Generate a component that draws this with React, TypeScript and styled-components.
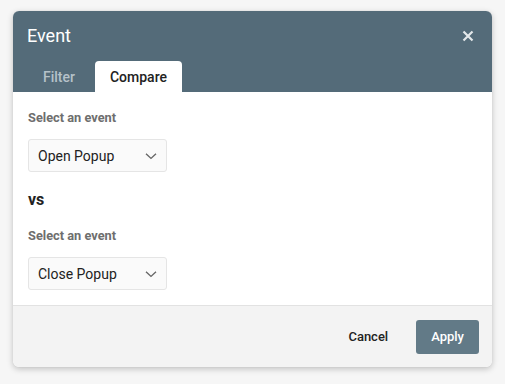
import React from "react";
import styled, { createGlobalStyle } from "styled-components";

const GlobalStyle = createGlobalStyle`
  html, body {
    margin: 0;
    padding: 0;
    background: #f6f6f6;
    font-family: Roboto, "Liberation Sans", Arial, sans-serif;
  }
`;

const Page = styled.div`
  padding: 11px 13px;
`;

const Dialog = styled.div`
  width: 479px;
  height: 356px;
  border-radius: 6px;
  overflow: hidden;
  background: #fff;
  box-shadow: 0 2px 6px rgba(0, 0, 0, 0.22), 0 0 1px rgba(0, 0, 0, 0.12);
  display: flex;
  flex-direction: column;
`;

const Header = styled.div`
  background: #546b79;
  padding: 13px 18px 0 14px;
  display: flex;
  flex-direction: column;
  gap: 13px;
`;

const TitleRow = styled.div`
  display: flex;
  align-items: center;
  justify-content: space-between;
  height: 24px;
`;

const Title = styled.h2`
  margin: 0;
  font-size: 18px;
  line-height: 24px;
  font-weight: 400;
  color: #fff;
`;

const CloseButton = styled.button`
  border: 0;
  background: none;
  padding: 0;
  width: 12px;
  height: 12px;
  display: flex;
  align-items: center;
  justify-content: center;
  cursor: pointer;
`;

const Tabs = styled.div`
  display: flex;
  gap: 5px;
  padding-left: 1px;
`;

const Tab = styled.div<{ $active?: boolean }>`
  height: 31px;
  padding: 0 15px;
  display: flex;
  align-items: center;
  border-radius: 4px 4px 0 0;
  font-size: 14px;
  font-weight: 500;
  background: ${(p) => (p.$active ? "#fff" : "transparent")};
  color: ${(p) => (p.$active ? "#222" : "#b6c2c9")};
`;

const Body = styled.div`
  flex: 1;
  padding: 18px 15px 0;
  display: flex;
  flex-direction: column;
  align-items: flex-start;
`;

const Label = styled.div`
  font-size: 12.8px;
  line-height: 16px;
  font-weight: 700;
  color: #6e6e6e;
  margin-bottom: 13px;
`;

const Select = styled.div`
  box-sizing: border-box;
  width: 139px;
  height: 33px;
  padding: 0 9px;
  border: 1px solid #e5e5e5;
  border-radius: 3px;
  background: #fafafa;
  display: flex;
  align-items: center;
  justify-content: space-between;
  font-size: 14px;
  color: #222;
`;

const Versus = styled.div`
  font-size: 16px;
  line-height: 20px;
  font-weight: 700;
  color: #222;
  margin: 18px 0 18px;
`;

const Footer = styled.div`
  height: 62px;
  box-sizing: border-box;
  border-top: 1px solid #e2e2e2;
  background: #f3f3f3;
  padding: 0 13px;
  display: flex;
  align-items: center;
  justify-content: flex-end;
  gap: 16px;
`;

const Button = styled.button<{ $primary?: boolean }>`
  height: 34px;
  padding: 0 ${(p) => (p.$primary ? "15px" : "12px")};
  border: 0;
  border-radius: 3px;
  font-family: inherit;
  font-size: 13px;
  font-weight: 500;
  cursor: pointer;
  background: ${(p) => (p.$primary ? "#627a87" : "transparent")};
  color: ${(p) => (p.$primary ? "#fff" : "#222")};
`;

const Chevron = () => (
  <svg width="12" height="8" viewBox="0 0 12 8" fill="none">
    <path d="M1 1.8l5 4.6 5-4.6" stroke="#666" strokeWidth="1.4" />
  </svg>
);

const CloseIcon = () => (
  <svg width="12" height="12" viewBox="0 0 12 12">
    <path d="M1.5 1.5l9 9M10.5 1.5l-9 9" stroke="#e4e8ea" strokeWidth="2.2" />
  </svg>
);

const EventSelect = ({ value }: { value: string }) => (
  <Select>
    <span>{value}</span>
    <Chevron />
  </Select>
);

export default function App() {
  return (
    <Page>
      <GlobalStyle />
      <Dialog>
        <Header>
          <TitleRow>
            <Title>Event</Title>
            <CloseButton aria-label="Close">
              <CloseIcon />
            </CloseButton>
          </TitleRow>
          <Tabs>
            <Tab>Filter</Tab>
            <Tab $active>Compare</Tab>
          </Tabs>
        </Header>
        <Body>
          <Label>Select an event</Label>
          <EventSelect value="Open Popup" />
          <Versus>vs</Versus>
          <Label>Select an event</Label>
          <EventSelect value="Close Popup" />
        </Body>
        <Footer>
          <Button>Cancel</Button>
          <Button $primary>Apply</Button>
        </Footer>
      </Dialog>
    </Page>
  );
}
